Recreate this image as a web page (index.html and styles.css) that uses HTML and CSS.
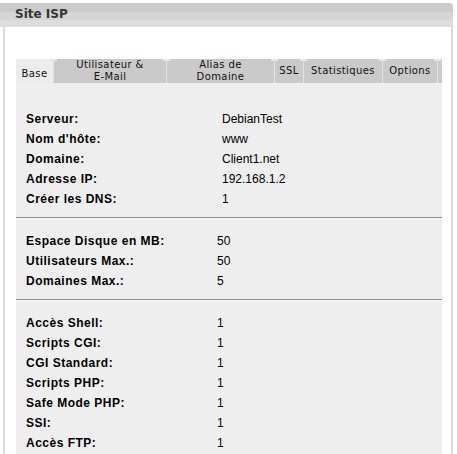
FILE: index.html
```html
<!DOCTYPE html>
<html lang="fr">

<head>
    <meta charset="UTF-8">
    <title>Site ISP</title>
    <link rel="stylesheet" href="styles.css">
</head>

<body>

    <div class="frame">
        <div class="header">
            <h2>Site ISP</h2>
        </div>

        <div class="content">
            <ul class="tabs">
                <li class="active t1">Base</li>
                <li class="t2">Utilisateur &amp;<br>E-Mail</li>
                <li class="t3">Alias de<br>Domaine</li>
                <li class="t4">SSL</li>
                <li class="t5">Statistiques</li>
                <li class="t6">Options</li>
            </ul>

            <div class="panel">
                <div class="group first">
                    <span class="label">Serveur:</span><span>DebianTest</span>
                    <span class="label">Nom d'hôte:</span><span>www</span>
                    <span class="label">Domaine:</span><span>Client1.net</span>
                    <span class="label">Adresse IP:</span><span>192.168.1.2</span>
                    <span class="label">Créer les DNS:</span><span>1</span>
                </div>
                <div class="sep"></div>
                <div class="group">
                    <span class="label">Espace Disque en MB:</span><span>50</span>
                    <span class="label">Utilisateurs Max.:</span><span>50</span>
                    <span class="label">Domaines Max.:</span><span>5</span>
                </div>
                <div class="sep"></div>
                <div class="group">
                    <span class="label">Accès Shell:</span><span>1</span>
                    <span class="label">Scripts CGI:</span><span>1</span>
                    <span class="label">CGI Standard:</span><span>1</span>
                    <span class="label">Scripts PHP:</span><span>1</span>
                    <span class="label">Safe Mode PHP:</span><span>1</span>
                    <span class="label">SSI:</span><span>1</span>
                    <span class="label">Accès FTP:</span><span>1</span>
                </div>
            </div>
        </div>
    </div>

</body>

</html>
```

FILE: styles.css
```css
* {
    margin: 0;
    padding: 0;
    box-sizing: border-box;
}

body {
    background: #fff;
    color: #000;
    font-family: "Liberation Sans", Arial, sans-serif;
    overflow: hidden;
}

.frame {
    width: 453px;
    height: 454px;
    padding-top: 3px;
}

.header {
    height: 24px;
    border-top-right-radius: 4px;
    background: linear-gradient(#cbcbcb 0, #cbcbcb 9px, #d5d5d5 9px, #d5d5d5 17px, #dddddd 17px);

    & h2 {
        font-family: "DejaVu Sans", Verdana, sans-serif;
        font-size: 12px;
        font-weight: bold;
        color: #333;
        padding: 4px 0 0 15px;
        line-height: 14px;
    }
}

.content {
    margin-left: 3px;
    height: 427px;
    border-left: 2px solid #dcdcdc;
    border-right: 2px solid #dcdcdc;
    padding: 32px 9px 0 11px;
}

.tabs {
    list-style: none;
    display: flex;
    height: 24px;
    background: #cacaca;
    font-family: "DejaVu Sans", Verdana, sans-serif;
    font-size: 10px;
    line-height: 12px;
    letter-spacing: 0.4px;
    color: #111;

    & li {
        position: relative;
        display: flex;
        align-items: center;
        justify-content: center;
        text-align: center;
        border-right: 1px solid #e2e2e2;
    }

    & li::before {
        content: "";
        position: absolute;
        top: 0;
        right: -4px;
        width: 7px;
        height: 2px;
        background: #e6e6e6;
    }

    & li.active {
        background: #ececec;
        padding-top: 6px;
    }

    & .t1 { width: 38px; }
    & .t2 { width: 113px; }
    & .t3 { width: 108px; }
    & .t4 { width: 29px; }
    & .t5 { width: 79px; }
    & .t6 { width: 55px; }
}

.panel {
    background: #eeeeee;
    height: 371px;
    padding-top: 26px;
}

.group {
    display: grid;
    grid-template-columns: 191px auto;
    grid-auto-rows: 20px;
    align-items: center;
    padding-left: 10px;
    font-size: 12px;

    &.first {
        grid-template-columns: 196px auto;
    }
}

.label {
    font-weight: bold;
    letter-spacing: 0.5px;
}

.sep {
    border-top: 1px solid #8e8e8e;
    border-bottom: 1px solid #f8f8f8;
    margin: 8px 0 12px;
}
```
